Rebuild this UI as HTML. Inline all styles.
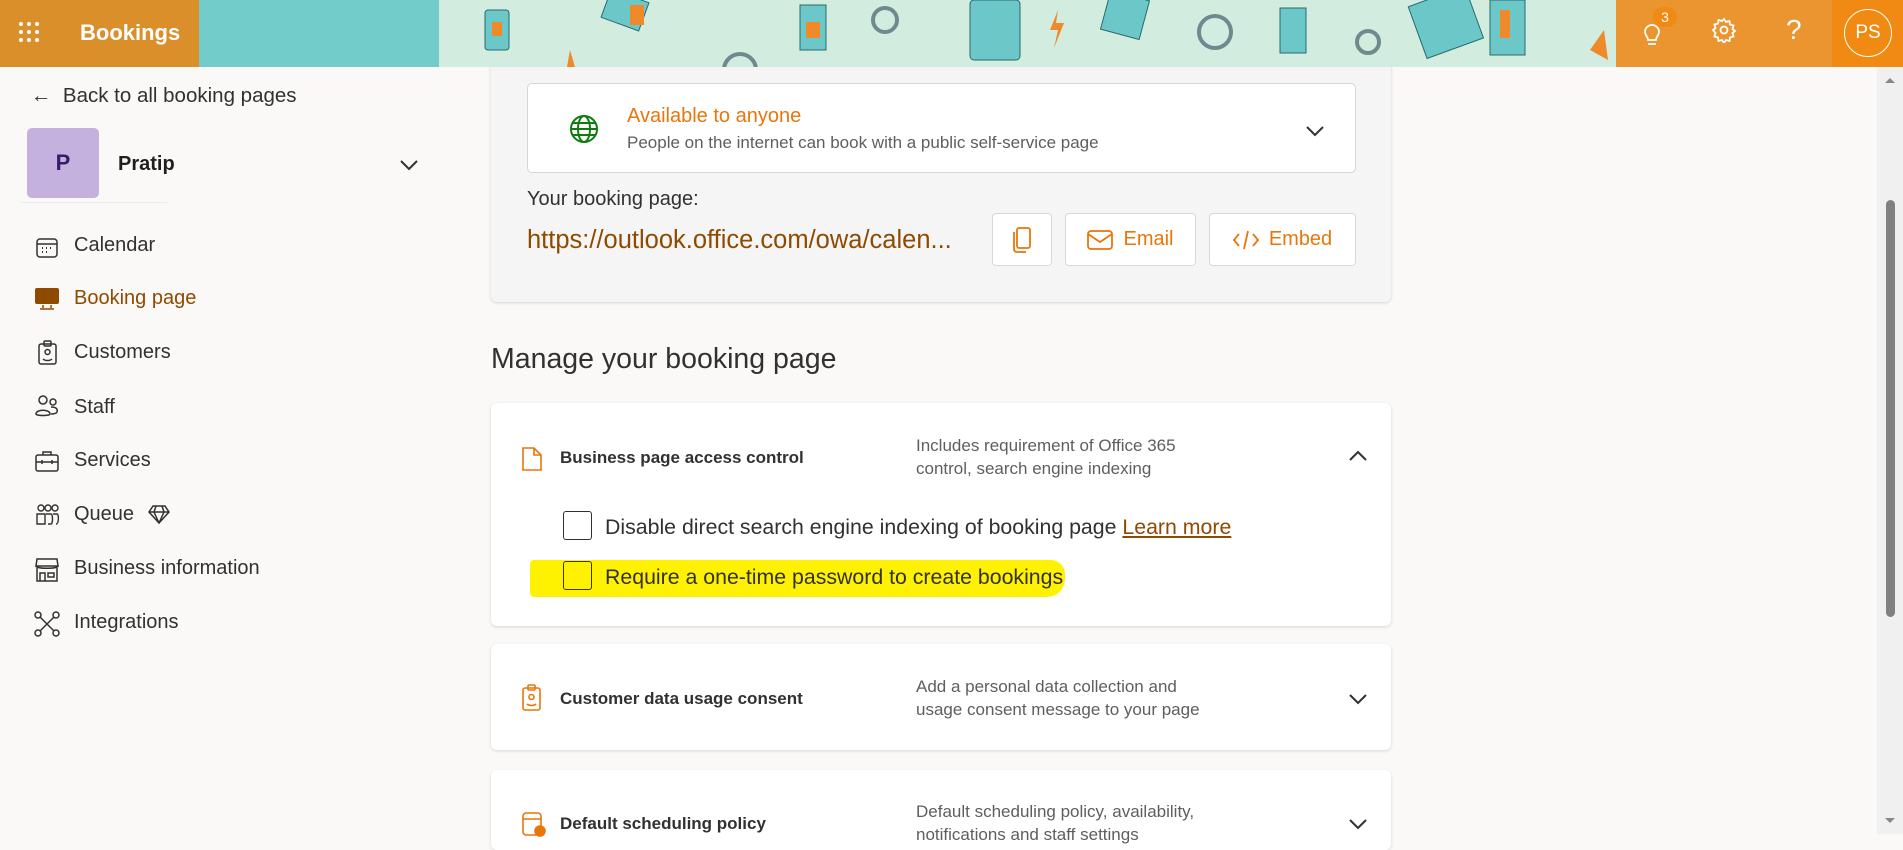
<!DOCTYPE html>
<html><head><meta charset="utf-8"><style>
*{box-sizing:border-box;margin:0;padding:0}
body{width:1903px;height:834px;overflow:hidden;background:#faf9f8;font-family:"Liberation Sans",sans-serif;color:#323130;position:relative}
.abs{position:absolute}
.hdr{left:0;top:0;width:1903px;height:67px;background:#d2ece0;overflow:hidden;z-index:10}
.nav{font-size:20px;color:#323130}
.nav div{position:absolute;left:74px}
.card{background:#fff;border-radius:6px;box-shadow:0 1px 3px rgba(0,0,0,.15)}
.btn{background:#fff;border:1px solid #d8d8d8;border-radius:4px;color:#e8760a;font-size:20px;display:flex;align-items:center;justify-content:center;gap:10px}
.t{font-size:17px;font-weight:bold;color:#323130}
.d{font-size:17px;color:#605e5c;line-height:23px}
.cb{width:29px;height:29px;border:1.5px solid #323130;border-radius:3px;background:transparent}
</style></head><body>
<div class="abs hdr">
 <div class="abs" style="left:0;top:0;width:199px;height:67px;background:#da8f2b"></div>
 <div class="abs" style="left:199px;top:0;width:240px;height:67px;background:#72cdca"></div>
 <svg class="abs" style="left:440px;top:0" width="1176" height="67">
  <g fill="#6cc7c9" stroke="#2a6a6a" stroke-width="1">
   <rect x="45" y="10" width="24" height="40" rx="3"/><rect x="165" y="-5" width="40" height="30" transform="rotate(20 185 10)"/>
   <rect x="360" y="5" width="26" height="45"/><rect x="530" y="0" width="50" height="60" rx="4"/>
   <rect x="665" y="-5" width="40" height="40" transform="rotate(15 685 15)"/><rect x="840" y="8" width="26" height="45"/>
   <rect x="975" y="-5" width="60" height="55" transform="rotate(-20 1005 20)"/><rect x="1050" y="0" width="35" height="55"/>
  </g>
  <g fill="#ef8a2a"><rect x="52" y="22" width="10" height="14"/><rect x="190" y="5" width="14" height="20"/><rect x="366" y="22" width="14" height="16"/><rect x="1060" y="10" width="10" height="28"/><path d="M618 10l-8 20h8l-4 18 10-25h-8z"/><path d="M1150 50l18 10-4-30z"/><path d="M130 50l5 17h-8z"/></g>
  <g fill="none" stroke="#6f8a8e" stroke-width="4"><circle cx="445" cy="20" r="12"/><circle cx="775" cy="32" r="16"/><circle cx="928" cy="42" r="11"/><circle cx="300" cy="70" r="16"/></g>
 </svg>
 <div class="abs" style="left:1616px;top:0;width:216px;height:67px;background:#ea9530"></div>
 <div class="abs" style="left:1832px;top:0;width:71px;height:67px;background:#f08a12"></div>
 <svg class="abs" style="left:18px;top:21px" width="24" height="24" fill="#fff"><circle cx="3" cy="3" r="2"/><circle cx="11" cy="3" r="2"/><circle cx="19" cy="3" r="2"/><circle cx="3" cy="11" r="2"/><circle cx="11" cy="11" r="2"/><circle cx="19" cy="11" r="2"/><circle cx="3" cy="19" r="2"/><circle cx="11" cy="19" r="2"/><circle cx="19" cy="19" r="2"/></svg>
 <div class="abs" style="left:80px;top:20px;color:#fff;font-size:22px;font-weight:bold">Bookings</div>
 <svg class="abs" style="left:1640px;top:18px" width="24" height="30" fill="none" stroke="#fff" stroke-width="1.8"><path d="M5 14a7 7 0 1 1 14 0c0 3-3 5-3 8H8c0-3-3-5-3-8zM8 26h8"/></svg>
 <div class="abs" style="left:1653px;top:7px;width:24px;height:20px;border-radius:10px;background:#f08a12;color:#fff;font-size:14px;text-align:center;line-height:20px">3</div>
 <svg class="abs" style="left:1711px;top:17px" width="26" height="26" fill="none" stroke="#fff" stroke-width="1.8"><circle cx="13" cy="13" r="3.5"/><path d="M13 2l2 3 3.5-1 .5 3.5 3.5 1-1 3.5 2.5 2-2.5 2 1 3.5-3.5 1-.5 3.5-3.5-1-2 3-2-3-3.5 1-.5-3.5-3.5-1 1-3.5L2 13l2.5-2-1-3.5 3.5-1L7.5 3 11 4z"/></svg>
 <div class="abs" style="left:1786px;top:14px;color:#fff;font-size:28px">?</div>
 <div class="abs" style="left:1844px;top:9px;width:48px;height:48px;border:1.5px solid #fff;border-radius:50%;color:#fff;font-size:19px;text-align:center;line-height:45px">PS</div>
</div>

<div class="abs" style="left:31px;top:84px;font-size:20.5px;color:#323130">←&nbsp; Back to all booking pages</div>
<div class="abs" style="left:27px;top:128px;width:72px;height:70px;background:#c5b1dd;border-radius:5px;color:#3b1a6b;font-size:22px;font-weight:bold;text-align:center;line-height:70px">P</div>
<div class="abs" style="left:118px;top:153px;font-size:20px;font-weight:bold;color:#201f1e">Pratip</div>
<svg class="abs" style="left:399px;top:158px" width="20" height="14" fill="none" stroke="#323130" stroke-width="2"><path d="M2 3l8 8 8-8"/></svg>
<div class="abs" style="left:21px;top:202px;width:146px;height:1px;background:#edebe9"></div>
<div class="nav">
 <svg class="abs" style="left:35px;top:237px" width="24" height="22" fill="none" stroke="#323130" stroke-width="1.5"><rect x="2" y="2" width="20" height="18" rx="3"/><path d="M2 7h20"/><path d="M7 11h1M11 11h1M15 11h1M7 15h1M11 15h1" stroke-width="2"/></svg>
 <div style="top:234px">Calendar</div>
 <svg class="abs" style="left:35px;top:288px" width="24" height="22"><rect x="0" y="0" width="24" height="16" rx="2" fill="#8f4a00"/><path d="M8 17v3M16 17v3M5 21h14" stroke="#8f4a00" stroke-width="1.5"/></svg>
 <div style="top:287px;color:#8f4a00">Booking page</div>
 <svg class="abs" style="left:37px;top:340px" width="22" height="26" fill="none" stroke="#323130" stroke-width="1.5"><rect x="2" y="4" width="17" height="20" rx="2"/><rect x="7" y="1" width="7" height="5" rx="1"/><circle cx="10.5" cy="12" r="2.5"/><path d="M6 19c2 2 7 2 9 0"/></svg>
 <div style="top:341px">Customers</div>
 <svg class="abs" style="left:34px;top:394px" width="26" height="24" fill="none" stroke="#323130" stroke-width="1.5"><circle cx="9" cy="6" r="4"/><circle cx="19" cy="8" r="3"/><path d="M2 20c0-5 14-5 14 0 0 2-14 2-14 0zM17 13c5 0 7 2 6 5-1 2-4 2-6 2"/></svg>
 <div style="top:396px">Staff</div>
 <svg class="abs" style="left:34px;top:449px" width="26" height="24" fill="none" stroke="#323130" stroke-width="1.5"><rect x="2" y="6" width="22" height="16" rx="2"/><path d="M9 6V3h8v3M2 13h22M8 11v4M18 11v4"/></svg>
 <div style="top:449px">Services</div>
 <svg class="abs" style="left:35px;top:503px" width="26" height="24" fill="none" stroke="#323130" stroke-width="1.4"><circle cx="6" cy="5" r="3"/><circle cx="13" cy="5" r="3"/><circle cx="20" cy="5" r="3"/><path d="M2 11h8v10H2zM11 11h5c2 0 2 10 0 10h-3M18 11h4c2 0 2 10-1 10"/></svg>
 <div style="top:503px">Queue</div>
 <svg class="abs" style="left:147px;top:504px" width="24" height="20" fill="none" stroke="#323130" stroke-width="1.5"><path d="M6 2h12l4 6-10 11L2 8zM2 8h20M9 2l-2 6 5 11 5-11-2-6"/></svg>
 <svg class="abs" style="left:34px;top:557px" width="26" height="26" fill="none" stroke="#323130" stroke-width="1.5"><path d="M3 2h20l1 7H2zM2 9c0 3 22 3 22 0M3 11v13h20V11M6 24v-8h5v8M14 16h6v4h-6z"/></svg>
 <div style="top:557px">Business information</div>
 <svg class="abs" style="left:34px;top:611px" width="26" height="26" fill="none" stroke="#323130" stroke-width="1.5"><circle cx="4" cy="4" r="3"/><circle cx="22" cy="4" r="3"/><circle cx="4" cy="22" r="3"/><circle cx="22" cy="22" r="3"/><path d="M6 6l14 14M20 6L6 20"/></svg>
 <div style="top:611px">Integrations</div>
</div>

<div class="abs" style="left:491px;top:30px;width:900px;height:272px;background:#f5f5f5;border-radius:6px;box-shadow:0 1px 3px rgba(0,0,0,.15)"></div>
<div class="abs" style="left:527px;top:83px;width:829px;height:90px;background:#fff;border:1px solid #d6d6d6;border-radius:5px"></div>
<svg class="abs" style="left:569px;top:114px" width="30" height="30" fill="none" stroke="#107c10" stroke-width="2"><circle cx="15" cy="15" r="13"/><ellipse cx="15" cy="15" rx="6" ry="13"/><path d="M2 15h26M4 9h22M4 21h22"/></svg>
<div class="abs" style="left:627px;top:105px;font-size:20px;color:#e8760a">Available to anyone</div>
<div class="abs" style="left:627px;top:133px;font-size:17px;color:#605e5c">People on the internet can book with a public self-service page</div>
<svg class="abs" style="left:1305px;top:124px" width="20" height="14" fill="none" stroke="#323130" stroke-width="2"><path d="M2 3l8 8 8-8"/></svg>
<div class="abs" style="left:527px;top:188px;font-size:20px;color:#323130">Your booking page:</div>
<div class="abs" style="left:527px;top:226px;font-size:25.5px;color:#8f4a00;white-space:nowrap">https://outlook.office.com/owa/calen...</div>
<div class="abs btn" style="left:992px;top:213px;width:60px;height:53px"><svg width="20" height="26" fill="none" stroke="#e8760a" stroke-width="1.8"><rect x="5" y="1" width="13" height="20" rx="2"/><path d="M2 5v17c0 2 1 3 3 3h9"/></svg></div>
<div class="abs btn" style="left:1065px;top:213px;width:131px;height:53px"><svg width="26" height="20" fill="none" stroke="#e8760a" stroke-width="1.8"><rect x="1" y="1" width="24" height="18" rx="3"/><path d="M1 4l12 8 12-8"/></svg>Email</div>
<div class="abs btn" style="left:1209px;top:213px;width:147px;height:53px"><svg width="26" height="22" fill="none" stroke="#e8760a" stroke-width="1.8"><path d="M6 5l-5 6 5 6M20 5l5 6-5 6M15 2l-4 18"/></svg>Embed</div>

<div class="abs" style="left:491px;top:343px;font-size:28.5px;color:#323130">Manage your booking page</div>

<div class="abs card" style="left:491px;top:403px;width:900px;height:223px"></div>
<svg class="abs" style="left:521px;top:446px" width="22" height="26" fill="none" stroke="#e8760a" stroke-width="1.6"><path d="M2 2h11l7 7v15H2zM13 2v7h7"/></svg>
<div class="abs t" style="left:560px;top:448px">Business page access control</div>
<div class="abs d" style="left:916px;top:434px">Includes requirement of Office 365<br>control, search engine indexing</div>
<svg class="abs" style="left:1348px;top:449px" width="20" height="14" fill="none" stroke="#323130" stroke-width="2"><path d="M2 11l8-8 8 8"/></svg>
<div class="abs cb" style="left:563px;top:511px"></div>
<div class="abs" style="left:605px;top:515px;font-size:21.3px;color:#323130;white-space:nowrap">Disable direct search engine indexing of booking page <span style="color:#8f4a00;text-decoration:underline">Learn more</span></div>
<div class="abs" style="left:530px;top:560px;width:535px;height:37px;background:#fff200;border-radius:4px 14px 18px 4px"></div>
<div class="abs cb" style="left:563px;top:561px"></div>
<div class="abs" style="left:605px;top:565px;font-size:21.3px;color:#323130;white-space:nowrap">Require a one-time password to create bookings</div>

<div class="abs card" style="left:491px;top:644px;width:900px;height:106px"></div>
<svg class="abs" style="left:521px;top:684px" width="22" height="28" fill="none" stroke="#e8760a" stroke-width="1.6"><rect x="2" y="4" width="17" height="22" rx="2"/><rect x="7" y="1" width="7" height="5" rx="1"/><circle cx="10.5" cy="13" r="2.5"/><path d="M6 20c2 2 7 2 9 0"/></svg>
<div class="abs t" style="left:560px;top:689px">Customer data usage consent</div>
<div class="abs d" style="left:916px;top:675px">Add a personal data collection and<br>usage consent message to your page</div>
<svg class="abs" style="left:1348px;top:692px" width="20" height="14" fill="none" stroke="#323130" stroke-width="2"><path d="M2 3l8 8 8-8"/></svg>

<div class="abs card" style="left:491px;top:770px;width:900px;height:80px"></div>
<svg class="abs" style="left:521px;top:811px" width="26" height="26" fill="none" stroke="#e8760a" stroke-width="1.6"><rect x="2" y="2" width="18" height="22" rx="3"/><path d="M2 8h18"/><circle cx="19" cy="20" r="5" fill="#e8760a"/></svg>
<div class="abs t" style="left:560px;top:814px">Default scheduling policy</div>
<div class="abs d" style="left:916px;top:800px">Default scheduling policy, availability,<br>notifications and staff settings</div>
<svg class="abs" style="left:1348px;top:817px" width="20" height="14" fill="none" stroke="#323130" stroke-width="2"><path d="M2 3l8 8 8-8"/></svg>

<div class="abs" style="left:1877px;top:67px;width:26px;height:767px;background:#f0f0f0"></div>
<div class="abs" style="left:1886px;top:200px;width:9px;height:417px;background:#808080;border-radius:5px"></div>
<div class="abs" style="left:1885px;top:78px;width:0;height:0;border-left:5px solid transparent;border-right:5px solid transparent;border-bottom:5px solid #888"></div>
<div class="abs" style="left:1885px;top:818px;width:0;height:0;border-left:5px solid transparent;border-right:5px solid transparent;border-top:5px solid #888"></div>
</body></html>
